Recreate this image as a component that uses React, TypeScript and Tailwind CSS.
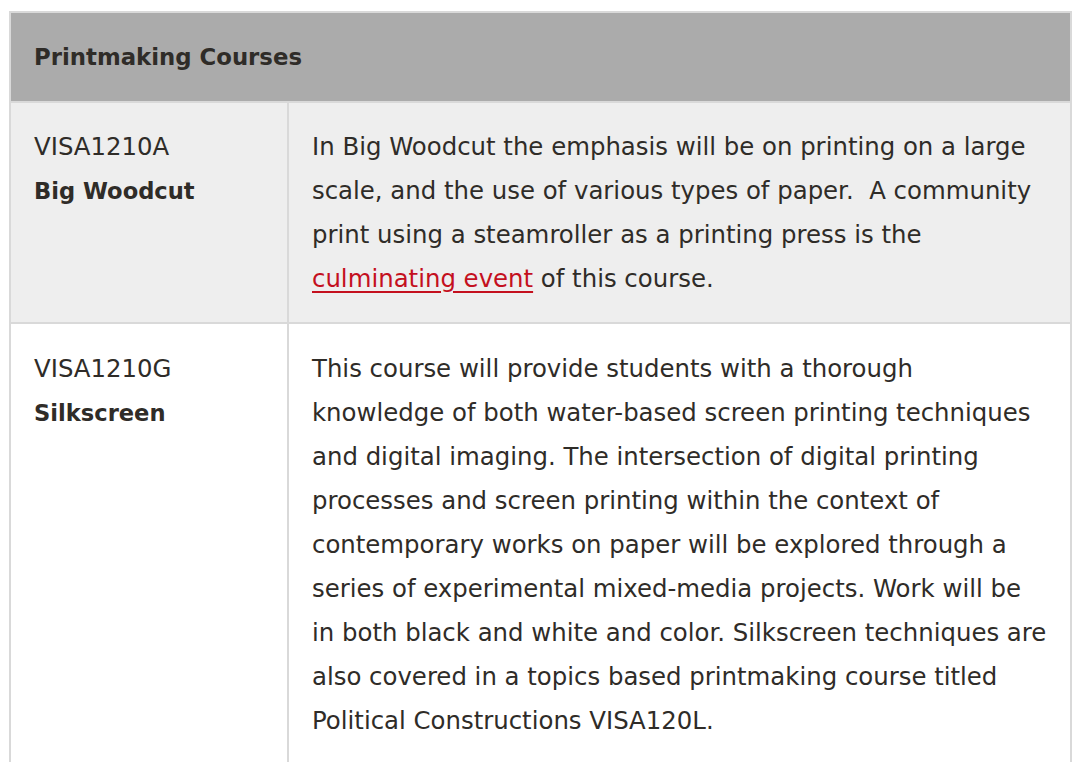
export default function App() {
  const font = { fontFamily: '"DejaVu Sans", "Noto Sans", sans-serif' };
  const cell = "align-top border-2 border-[#d9d9d9] px-[23px] pt-[22px] pb-[21px] whitespace-nowrap";
  return (
    <div className="w-[1080px] h-[762px] bg-white overflow-hidden pt-[11px] pl-[9px]" style={font}>
      <table className="w-[1063px] table-fixed border-collapse text-[#2f2c28] text-[24.4px] leading-[44px]">
        <colgroup>
          <col className="w-[278px]" />
          <col />
        </colgroup>
        <thead>
          <tr>
            <th colSpan={2} className="bg-[#ababab] border-2 border-[#d9d9d9] text-left font-bold text-[22.8px] px-[23px] py-[22px]">
              Printmaking Courses
            </th>
          </tr>
        </thead>
        <tbody>
          <tr className="bg-[#eeeeee]">
            <td className={cell}>
              VISA1210A
              <br />
              <strong className="text-[22.6px]">Big Woodcut</strong>
            </td>
            <td className={cell}>
              In Big Woodcut the emphasis will be on printing on a large
              <br />
              scale, and the use of various types of paper.&nbsp; A community
              <br />
              print using a steamroller as a printing press is the
              <br />
              <a href="#" className="text-[#c4101e] underline underline-offset-[4px]">culminating event</a> of this course.
            </td>
          </tr>
          <tr className="bg-white">
            <td className={`${cell} pt-[23px]`}>
              VISA1210G
              <br />
              <strong className="text-[22.6px]">Silkscreen</strong>
            </td>
            <td className={`${cell} pt-[23px]`}>
              This course will provide students with a thorough
              <br />
              knowledge of both water-based screen printing techniques
              <br />
              and digital imaging. The intersection of digital printing
              <br />
              processes and screen printing within the context of
              <br />
              contemporary works on paper will be explored through a
              <br />
              series of experimental mixed-media projects. Work will be
              <br />
              in both black and white and color. Silkscreen techniques are
              <br />
              also covered in a topics based printmaking course titled
              <br />
              Political Constructions VISA120L.
            </td>
          </tr>
        </tbody>
      </table>
    </div>
  );
}
